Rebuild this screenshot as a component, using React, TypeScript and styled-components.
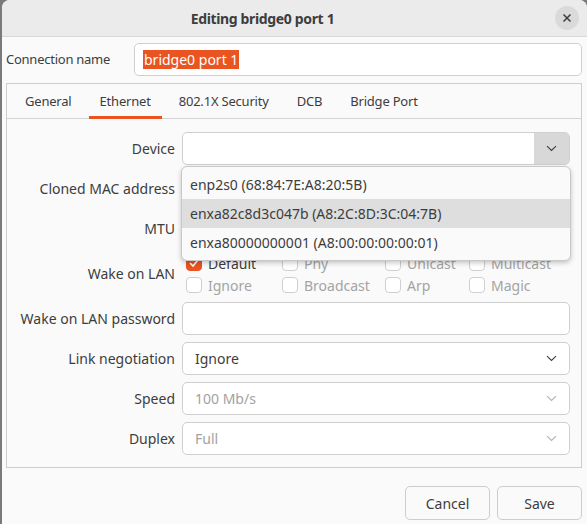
import React from "react"
import styled, { createGlobalStyle } from "styled-components"

const Global = createGlobalStyle`
  html, body { margin:0; padding:0; height:100%; }
  body {
    background:#7a7a7a;
    font-family:"Noto Sans", "DejaVu Sans", sans-serif;
    font-size:14px;
    color:#3d3d3d;
  }
  #root { height:100%; }
`

const Window = styled.div`
  height:100%;
  margin-left:2px;
  background:#fafafa;
  border-top-left-radius:8px;
  border-top-right-radius:8px;
  display:flex;
  flex-direction:column;
  overflow:hidden;
`
const HeaderBar = styled.div`
  height:36px;
  flex:none;
  background:#ebebeb;
  border-bottom:1px solid #d8d8d8;
  display:flex;
  align-items:center;
  justify-content:center;
  position:relative;
`
const Title = styled.div`
  font-weight:bold;
  font-size:14px;
  letter-spacing:-0.35px;
  color:#3d3d3d;
  margin-left:-64px;
`
const CloseButton = styled.div`
  position:absolute;
  right:8px;
  top:6px;
  width:24px;
  height:24px;
  border-radius:50%;
  background:#dadada;
  display:flex;
  align-items:center;
  justify-content:center;
`
const Body = styled.div`
  flex:1;
  display:flex;
  flex-direction:column;
  padding:6px 5px 4px 4px;
`
const NameRow = styled.div`
  display:flex;
  align-items:center;
  gap:12px;
  height:32px;
`
const NameLabel = styled.div`
  white-space:nowrap;
  font-size:13px;
  letter-spacing:-0.25px;
  width:116px;
`
const Entry = styled.div<{ $disabled?: boolean }>`
  flex:1;
  height:33px;
  box-sizing:border-box;
  border:1px solid #cfcfcf;
  border-radius:5px;
  background:#fff;
  display:flex;
  align-items:center;
  padding:0 12px;
  color:${p => (p.$disabled ? "#a2a2a2" : "#3d3d3d")};
  position:relative;
`
const Selected = styled.span`
  background:#e95420;
  color:#fff;
  padding:0 1px;
  margin-left:-4px;
`
const Notebook = styled.div`
  margin-top:8px;
  border:1px solid #cdcdcd;
  display:flex;
  flex-direction:column;
`
const Tabs = styled.div`
  display:flex;
  height:34px;
  border-bottom:1px solid #d4d4d4;
  padding-left:7px;
`
const Tab = styled.div<{ $active?: boolean }>`
  padding:0 11px;
  margin-right:6px;
  display:flex;
  align-items:center;
  position:relative;
  font-size:13px;
  letter-spacing:-0.2px;
  &::after {
    content:"";
    position:absolute;
    left:0; right:0; bottom:-1px;
    height:3px;
    background:${p => (p.$active ? "#e95420" : "transparent")};
  }
`
const Form = styled.div`
  display:grid;
  grid-template-columns:168px 1fr;
  column-gap:7px;
  row-gap:7px;
  padding:13px 11px 12px 0;
`
const Label = styled.div`
  text-align:right;
  align-self:center;
  white-space:nowrap;
`
const Control = styled.div`
  position:relative;
  display:flex;
`
const ComboButton = styled.div<{ $pressed?: boolean }>`
  position:absolute;
  right:0; top:0; bottom:0;
  width:35px;
  border-radius:0 4px 4px 0;
  background:${p => (p.$pressed ? "#d8d8d8" : "transparent")};
  display:flex;
  align-items:center;
  justify-content:center;
`
const Popup = styled.div`
  position:absolute;
  left:-1px;
  right:-1px;
  top:34px;
  z-index:5;
  background:#fafafa;
  border:1px solid #c8c8c8;
  border-radius:6px;
  box-shadow:0 2px 5px rgba(0,0,0,0.22);
  padding:3px 0;
`
const PopupItem = styled.div<{ $hover?: boolean }>`
  height:29px;
  display:flex;
  align-items:center;
  padding-left:8px;
  background:${p => (p.$hover ? "#dedede" : "transparent")};
`
const Checks = styled.div`
  display:grid;
  grid-template-columns:96px 103px 84px auto;
  grid-auto-rows:22px;
  padding-left:4px;
  height:43px;
`
const Check = styled.label<{ $disabled?: boolean }>`
  display:flex;
  align-items:center;
  gap:6px;
  color:${p => (p.$disabled ? "#a4a4a4" : "#3d3d3d")};
`
const Box = styled.span<{ $checked?: boolean }>`
  width:16px;
  height:16px;
  box-sizing:border-box;
  border-radius:4px;
  border:1px solid ${p => (p.$checked ? "#e95420" : "#cfcfcf")};
  background:${p => (p.$checked ? "#e95420" : "#fff")};
  display:flex;
  align-items:center;
  justify-content:center;
`
const Footer = styled.div`
  margin-top:auto;
  display:flex;
  justify-content:flex-end;
  gap:7px;
`
const Button = styled.div`
  width:85px;
  height:34px;
  box-sizing:border-box;
  border:1px solid #cdcdcd;
  border-radius:5px;
  background:#fafafa;
  display:flex;
  align-items:center;
  justify-content:center;
`

const Chevron = ({ color = "#3d3d3d" }: { color?: string }) => (
  <svg width="11" height="7" viewBox="0 0 11 7">
    <path d="M1 1.2 L5.5 5.5 L10 1.2" fill="none" stroke={color} strokeWidth="1.1" />
  </svg>
)

const Combo = ({ value, disabled }: { value: string; disabled?: boolean }) => (
  <Entry $disabled={disabled}>
    {value}
    <ComboButton>
      <Chevron color={disabled ? "#b0b0b0" : "#3d3d3d"} />
    </ComboButton>
  </Entry>
)

const checks = [
  { t: "Default", c: true },
  { t: "Phy" },
  { t: "Unicast" },
  { t: "Multicast" },
  { t: "Ignore" },
  { t: "Broadcast" },
  { t: "Arp" },
  { t: "Magic" },
]

const devices = [
  "enp2s0 (68:84:7E:A8:20:5B)",
  "enxa82c8d3c047b (A8:2C:8D:3C:04:7B)",
  "enxa80000000001 (A8:00:00:00:00:01)",
]

export default function App() {
  return (
    <>
      <Global />
      <Window>
        <HeaderBar>
          <Title>Editing bridge0 port 1</Title>
          <CloseButton>
            <svg width="10" height="10" viewBox="0 0 10 10">
              <path d="M1.5 1.5 L8.5 8.5 M8.5 1.5 L1.5 8.5" stroke="#3d3d3d" strokeWidth="1.5" />
            </svg>
          </CloseButton>
        </HeaderBar>
        <Body>
          <NameRow>
            <NameLabel>Connection name</NameLabel>
            <Entry>
              <Selected>bridge0 port 1</Selected>
            </Entry>
          </NameRow>
          <Notebook>
            <Tabs>
              <Tab>General</Tab>
              <Tab $active>Ethernet</Tab>
              <Tab>802.1X Security</Tab>
              <Tab>DCB</Tab>
              <Tab>Bridge Port</Tab>
            </Tabs>
            <Form>
              <Label>Device</Label>
              <Control>
                <Entry>
                  <ComboButton $pressed>
                    <Chevron />
                  </ComboButton>
                </Entry>
                <Popup>
                  {devices.map((d, i) => (
                    <PopupItem key={d} $hover={i === 1}>{d}</PopupItem>
                  ))}
                </Popup>
              </Control>
              <Label>Cloned MAC address</Label>
              <Control>
                <Combo value="" />
              </Control>
              <Label>MTU</Label>
              <Control>
                <Entry />
              </Control>
              <Label>Wake on LAN</Label>
              <Checks>
                {checks.map(c => (
                  <Check key={c.t} $disabled={!c.c}>
                    <Box $checked={c.c}>
                      {c.c && (
                        <svg width="10" height="8" viewBox="0 0 10 8">
                          <path d="M1 4 L4 7 L9 1" fill="none" stroke="#fff" strokeWidth="1.6" />
                        </svg>
                      )}
                    </Box>
                    {c.t}
                  </Check>
                ))}
              </Checks>
              <Label>Wake on LAN password</Label>
              <Control>
                <Entry />
              </Control>
              <Label>Link negotiation</Label>
              <Control>
                <Combo value="Ignore" />
              </Control>
              <Label>Speed</Label>
              <Control>
                <Combo value="100 Mb/s" disabled />
              </Control>
              <Label>Duplex</Label>
              <Control>
                <Combo value="Full" disabled />
              </Control>
            </Form>
          </Notebook>
          <Footer>
            <Button>Cancel</Button>
            <Button>Save</Button>
          </Footer>
        </Body>
      </Window>
    </>
  )
}
